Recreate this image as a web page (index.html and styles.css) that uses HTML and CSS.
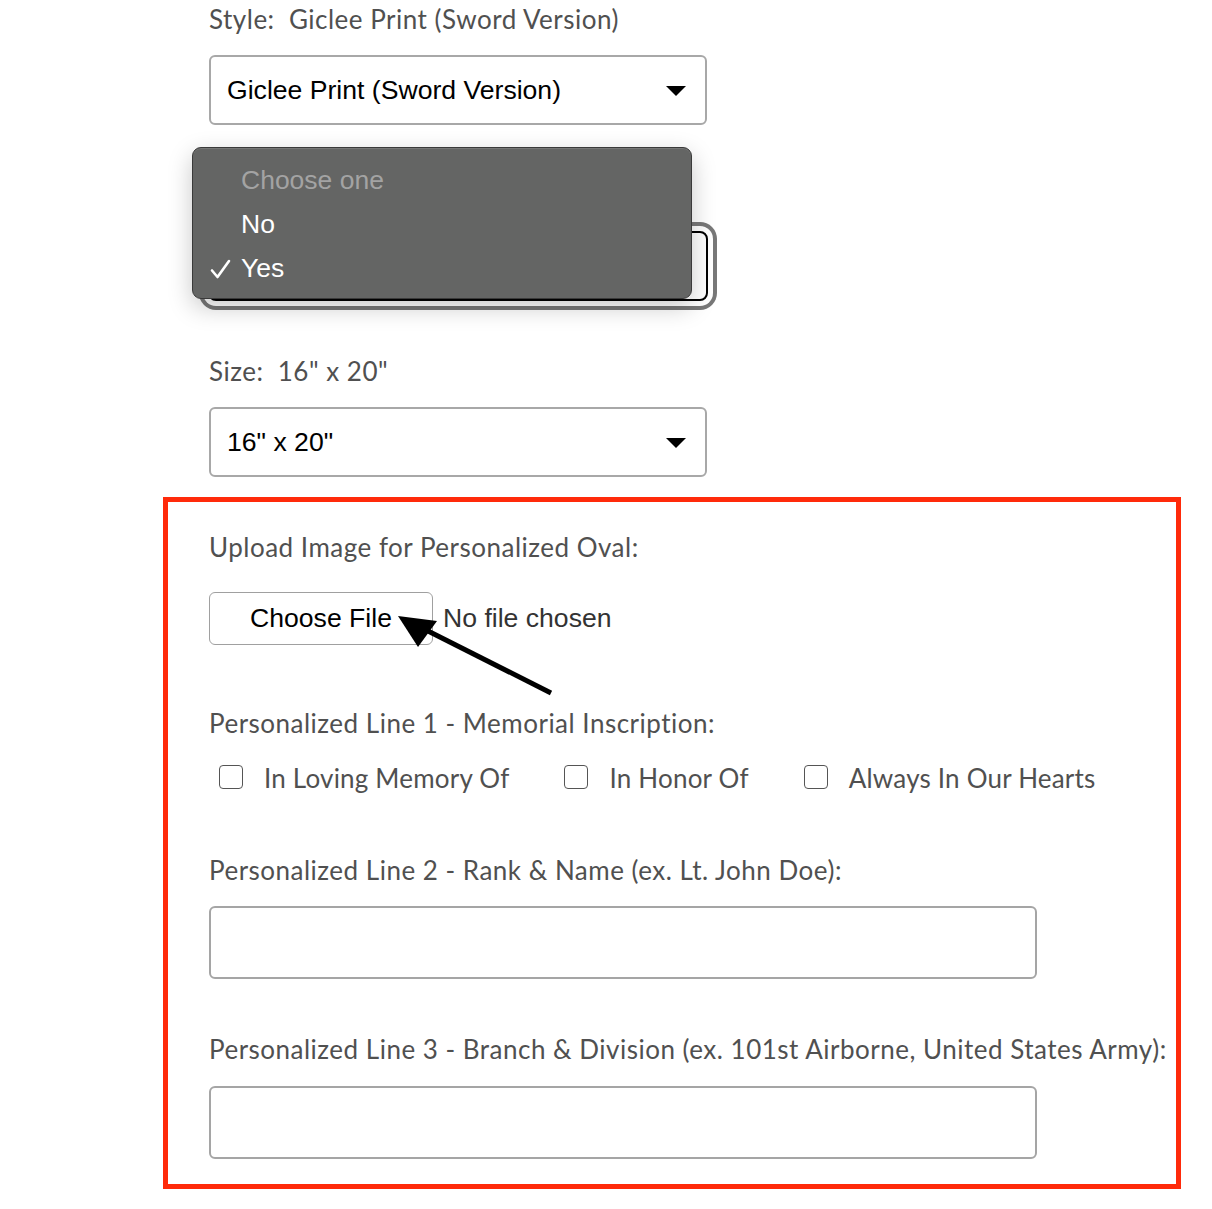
FILE: index.html
```html
<!DOCTYPE html>
<html lang="en">
<head>
<meta charset="utf-8">
<title>Product options</title>
<link rel="stylesheet" href="styles.css">
</head>
<body>
<div class="page">
  <div class="field">
    <div class="label">Style:&nbsp; Giclee Print (Sword Version)</div>
    <div class="select">
      <span>Giclee Print (Sword Version)</span>
      <svg class="caret" width="20" height="10" viewBox="0 0 20 10"><path d="M0 0H20L10 10Z" fill="#000"/></svg>
    </div>
  </div>

  <div class="field field-open">
    <div class="label"></div>
    <div class="select focused">
      <span></span>
      <svg class="caret" width="20" height="10" viewBox="0 0 20 10"><path d="M0 0H20L10 10Z" fill="#000"/></svg>
    </div>
    <div class="menu">
      <div class="menu-item placeholder">Choose one</div>
      <div class="menu-item">No</div>
      <div class="menu-item"><svg class="check" width="22" height="20" viewBox="0 0 22 20"><path d="M2 11.5 L7.5 18 L19 2" fill="none" stroke="#fff" stroke-width="2.6" stroke-linecap="round" stroke-linejoin="round"/></svg>Yes</div>
    </div>
  </div>

  <div class="field">
    <div class="label">Size:&nbsp; 16" x 20"</div>
    <div class="select">
      <span>16" x 20"</span>
      <svg class="caret" width="20" height="10" viewBox="0 0 20 10"><path d="M0 0H20L10 10Z" fill="#000"/></svg>
    </div>
  </div>

  <div class="highlight">
    <div class="label">Upload Image for Personalized Oval:</div>
    <div class="file-row">
      <button class="file-btn" type="button">Choose File</button>
      <span class="file-name">No file chosen</span>
    </div>

    <div class="label line1">Personalized Line 1 - Memorial Inscription:</div>
    <div class="checks">
      <label class="check-item"><span class="box"></span>In Loving Memory Of</label>
      <label class="check-item"><span class="box"></span>In Honor Of</label>
      <label class="check-item"><span class="box"></span>Always In Our Hearts</label>
    </div>

    <div class="label line2">Personalized Line 2 - Rank &amp; Name (ex. Lt. John Doe):</div>
    <input class="text-input" type="text">

    <div class="label line3">Personalized Line 3 - Branch &amp; Division (ex. 101st Airborne, United States Army):</div>
    <input class="text-input" type="text">

    <svg class="pointer" width="180" height="100" viewBox="0 0 180 100">
      <line x1="178" y1="93" x2="55" y2="31" stroke="#000" stroke-width="5"/>
      <path d="M25 16 L64 21 L45 47 Z" fill="#000"/>
    </svg>
  </div>
</div>
</body>
</html>
```

FILE: styles.css
```css
html, body {
  margin: 0;
  padding: 0;
  background: #ffffff;
}

.page {
  padding-left: 209px;
  padding-top: 1px;
  font-family: "Lato", "Open Sans", sans-serif;
}

.label {
  font-family: "Lato", sans-serif;
  font-size: 26px;
  line-height: 36px;
  height: 36px;
  color: #505050;
  white-space: nowrap;
  letter-spacing: 0.5px;
}

.field {
  position: relative;
  width: 498px;
  margin-bottom: 52px;
}

.field .label {
  margin-bottom: 18px;
}

.select {
  box-sizing: border-box;
  width: 498px;
  height: 70px;
  border: 2px solid #a8a8a8;
  border-radius: 6px;
  background: #fff;
  display: flex;
  align-items: center;
  justify-content: space-between;
  padding: 0 19px 0 16px;
  font-family: "Liberation Sans", Arial, sans-serif;
  font-size: 26.6px;
  color: #000;
}

.caret {
  display: block;
  margin-top: 2px;
}

.select.focused {
  width: 500px;
  margin-left: -1px;
  border: 2px solid #000;
  box-shadow: 0 0 0 5px #fff, 0 0 0 9px #787878;
  border-radius: 8px;
}

.menu {
  position: absolute;
  left: -17px;
  top: -30px;
  width: 500px;
  height: 152px;
  box-sizing: border-box;
  background: #646564;
  border: 1px solid #3a3a3a;
  border-radius: 9px;
  box-shadow: 0 8px 24px rgba(0, 0, 0, 0.22), inset 0 1px 0 rgba(255, 255, 255, 0.12);
  padding-top: 10px;
  font-family: "Liberation Sans", Arial, sans-serif;
  font-size: 26.5px;
  color: #fff;
}

.menu-item {
  display: flex;
  align-items: center;
  height: 44px;
  line-height: 44px;
  padding-left: 48px;
}

.menu-item.placeholder {
  color: #a3a3a3;
}

.check {
  display: block;
  margin-left: -31px;
  margin-right: 9px;
  margin-top: 2px;
}

.highlight {
  position: relative;
  margin-left: -46px;
  margin-top: -32px;
  width: 1018px;
  box-sizing: border-box;
  border: 5px solid #ff2a0a;
  padding: 27px 0 25px 41px;
}

.file-row {
  display: flex;
  align-items: center;
  margin-top: 27px;
  height: 53px;
}

.file-btn {
  box-sizing: border-box;
  width: 224px;
  height: 53px;
  border: 1.5px solid #a0a0a0;
  border-radius: 6px;
  background: #fff;
  font-family: "Liberation Sans", Arial, sans-serif;
  font-size: 26.6px;
  color: #000;
  padding: 0;
}

.file-name {
  margin-left: 10px;
  font-family: "Liberation Sans", Arial, sans-serif;
  font-size: 26.6px;
  color: #333;
}

.line1 {
  margin-top: 60px;
}

.checks {
  display: flex;
  margin-top: 19px;
  height: 36px;
  align-items: center;
  gap: 45px;
}

.check-item {
  display: flex;
  align-items: center;
  padding-left: 10px;
  font-family: "Lato", sans-serif;
  font-size: 26px;
  letter-spacing: 0.2px;
  color: #505050;
  line-height: 36px;
}

.box {
  box-sizing: border-box;
  width: 24px;
  height: 24px;
  border: 1.5px solid #555;
  border-radius: 4px;
  margin-right: 21px;
  margin-top: -2px;
  background: #fff;
}

.line2 {
  margin-top: 56px;
}

.line3 {
  margin-top: 52px;
}

.text-input {
  display: block;
  box-sizing: border-box;
  width: 828px;
  height: 73px;
  margin: 18px 0 0 0;
  border: 2px solid #a5a5a5;
  border-radius: 6px;
  background: #fff;
  font-size: 24px;
}

.line3 + .text-input {
  margin-top: 19px;
}

.pointer {
  position: absolute;
  left: 205px;
  top: 98px;
}
```
